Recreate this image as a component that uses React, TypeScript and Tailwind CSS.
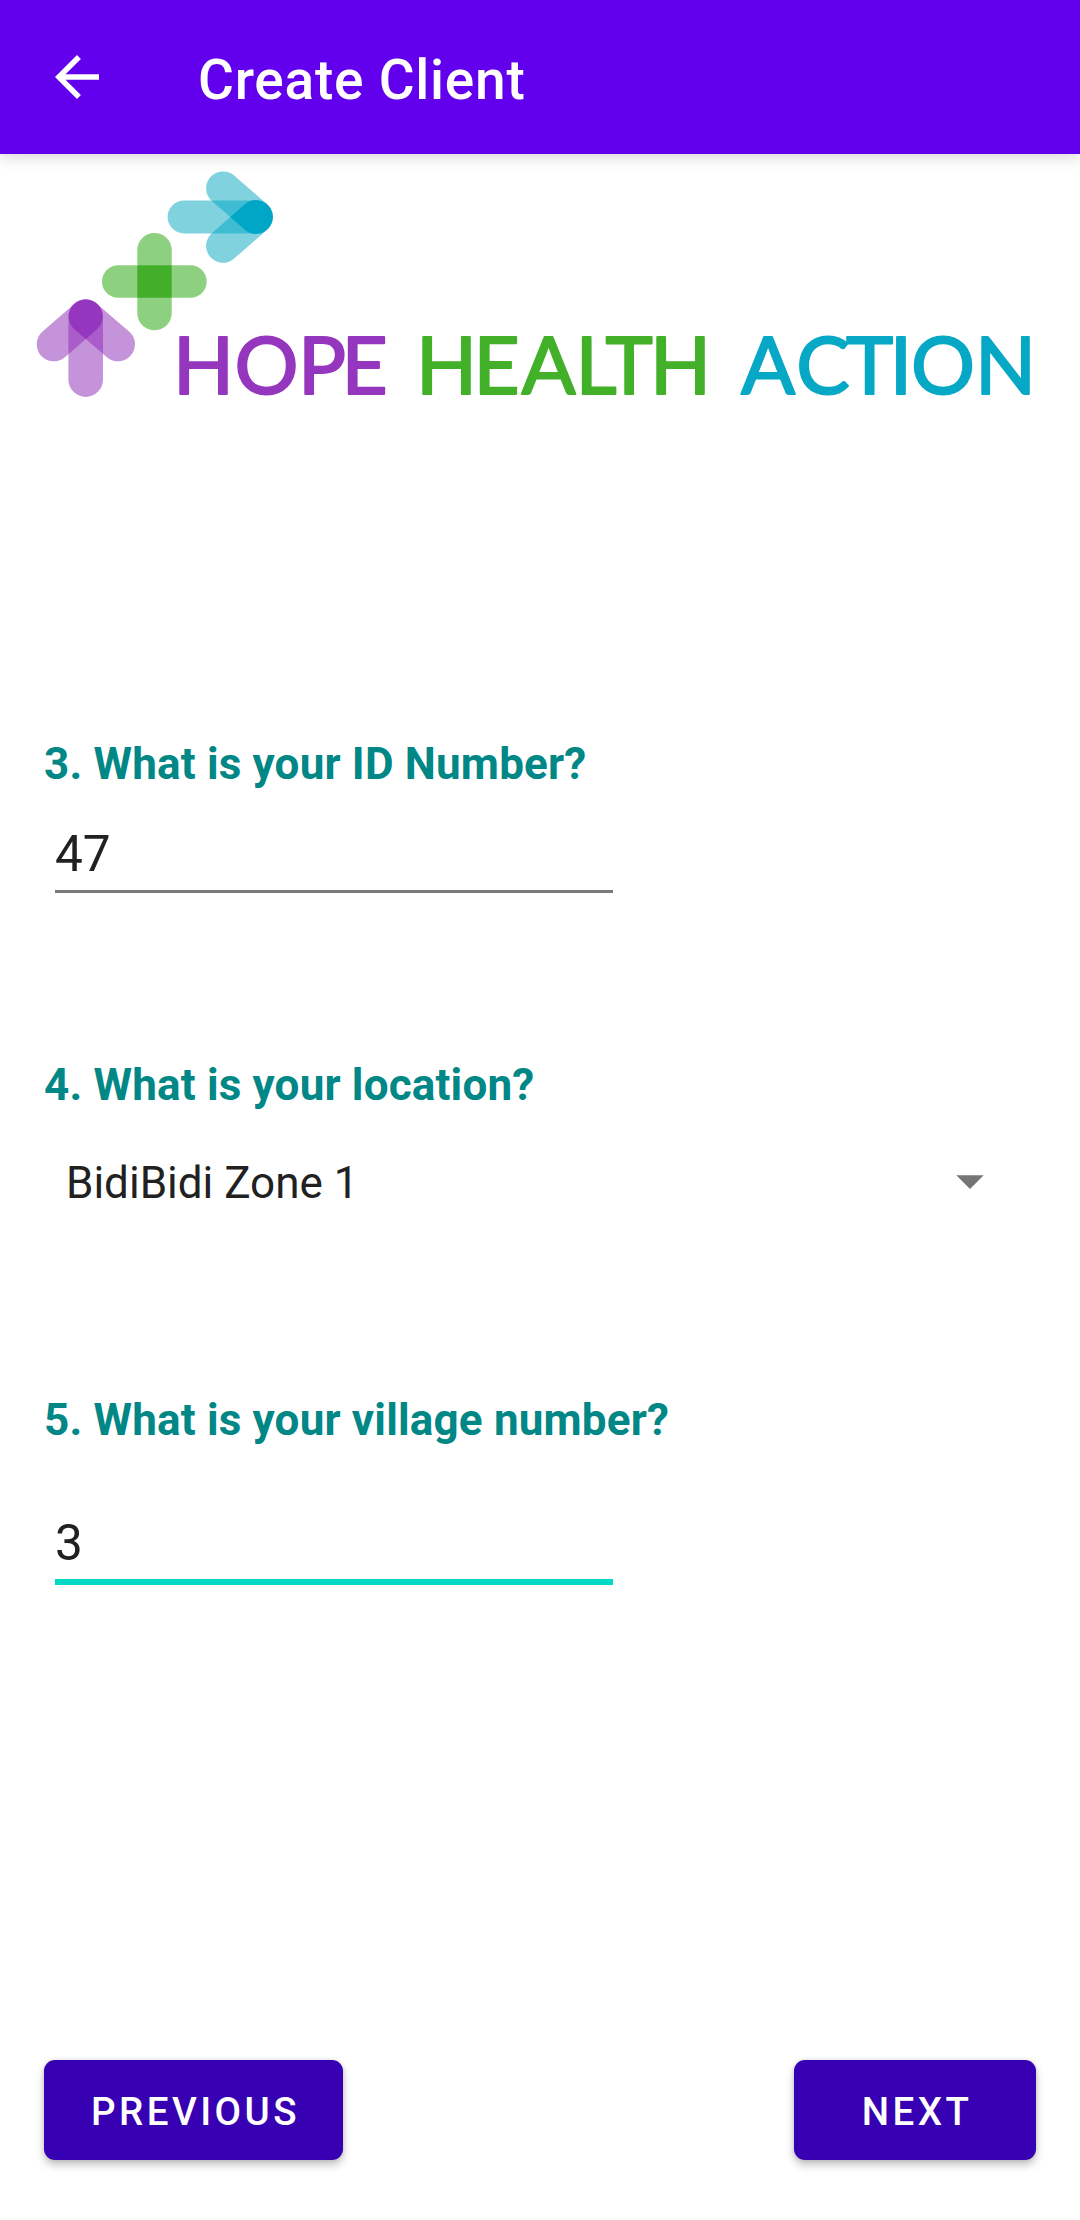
import type { ReactNode } from 'react';

type CapsuleProps = { x1: number; y1: number; x2: number; y2: number; r: number };

/* A pill whose round ends are centred on the two given points. */
function Capsule({ x1, y1, x2, y2, r }: CapsuleProps) {
  const length = Math.hypot(x2 - x1, y2 - y1);
  const angle = (Math.atan2(y2 - y1, x2 - x1) * 180) / Math.PI;
  return (
    <rect
      x={x1 - r}
      y={y1 - r}
      width={length + 2 * r}
      height={2 * r}
      rx={r}
      transform={`rotate(${angle} ${x1} ${y1})`}
    />
  );
}

type ArrowProps = {
  id: string;
  stem: CapsuleProps;
  armA: CapsuleProps;
  armB: CapsuleProps;
  light: string;
  mid: string;
  dark: string;
};

function LogoArrow({ id, stem, armA, armB, light, mid, dark }: ArrowProps) {
  return (
    <g>
      <clipPath id={`${id}-stem`}>{Capsule(stem)}</clipPath>
      <clipPath id={`${id}-arm`}>{Capsule(armB)}</clipPath>
      <g fill={light}>
        <Capsule {...stem} />
        <Capsule {...armA} />
        <Capsule {...armB} />
      </g>
      <g fill={mid} clipPath={`url(#${id}-stem)`}>
        <Capsule {...armA} />
        <Capsule {...armB} />
      </g>
      <g fill={dark} clipPath={`url(#${id}-arm)`}>
        <Capsule {...armA} />
      </g>
    </g>
  );
}

function LogoWord({ x, color, children }: { x: string; color: string; children: string }) {
  return (
    <text
      x={x}
      y={394.3}
      fill={color}
      stroke={color}
      strokeWidth={2}
      strokeLinejoin="round"
      textAnchor="middle"
      fontSize={80}
      fontFamily="Lato, sans-serif"
    >
      {children}
    </text>
  );
}

function Logo() {
  return (
    <svg
      className="h-[286px] w-full overflow-visible"
      viewBox="0 154 1080 286"
      role="img"
      aria-label="Hope Health Action"
    >
      <LogoArrow
        id="up"
        stem={{ x1: 85.7, y1: 316.6, x2: 85.7, y2: 379.6, r: 17.3 }}
        armA={{ x1: 85.7, y1: 316.6, x2: 53.7, y2: 344.3, r: 17 }}
        armB={{ x1: 85.7, y1: 316.6, x2: 118, y2: 344.3, r: 17 }}
        light="#c593d9"
        mid="#a95cca"
        dark="#9537be"
      />
      <g fill="#8dd07f">
        <rect x="137.3" y="233" width="34.4" height="97.3" rx="17.2" />
        <rect x="102" y="265.3" width="104.7" height="32.4" rx="16.2" />
      </g>
      <rect x="137.3" y="265.3" width="34.4" height="32.4" fill="#42ae29" />
      <LogoArrow
        id="right"
        stem={{ x1: 256.3, y1: 217, x2: 184, y2: 217, r: 16.4 }}
        armA={{ x1: 256, y1: 217, x2: 223, y2: 188.3, r: 16.9 }}
        armB={{ x1: 256, y1: 217, x2: 223, y2: 245.9, r: 16.9 }}
        light="#80d2df"
        mid="#3dbcd2"
        dark="#00a6c6"
      />
      <LogoWord x="203.5 266.5 322 364.5" color="#9537be">HOPE</LogoWord>
      <LogoWord x="446.5 496.5 548.5 596 629 680.5" color="#42b029">HEALTH</LogoWord>
      <LogoWord x="768 823 869.5 901 943 1005.5" color="#06a8c5">ACTION</LogoWord>
    </svg>
  );
}

function Question({ children }: { children: ReactNode }) {
  return (
    <label className="ml-[44px] block text-[44px]/[52px] font-bold tracking-[0.18px] text-[#018786]">{children}</label>
  );
}

function ContainedButton({ children, className }: { children: string; className: string }) {
  return (
    <button
      className={`flex h-[100px] items-center justify-center rounded-[11px] bg-[#3700b3] pt-[3px] pl-[4px] text-[38.5px] font-medium tracking-[0.0893em] text-white shadow-[0_5px_8px_rgba(0,0,0,0.24),0_0_4px_rgba(0,0,0,0.12)] ${className}`}
    >
      {children}
    </button>
  );
}

export default function App() {
  return (
    <div className="flex h-[2220px] w-[1080px] flex-col bg-white font-[Roboto,sans-serif] text-[#212121]">
      <header className="z-10 flex h-[154px] shrink-0 items-center bg-[#6200ee] pl-[44px] text-white shadow-[0_3px_14px_rgba(0,0,0,0.16)]">
        <svg className="size-[66px]" viewBox="0 0 24 24" fill="currentColor">
          <path d="M20 11H7.83l5.59-5.59L12 4l-8 8 8 8 1.41-1.41L7.83 13H20v-2z" />
        </svg>
        <h1 className="ml-[88px] pt-[6px] text-[55px] font-medium tracking-[0.75px]">Create Client</h1>
      </header>

      <Logo />

      <main className="flex flex-1 flex-col pt-[298px]">
        <section>
          <Question>3. What is your ID Number?</Question>
          <div className="mt-[35px] ml-[55px] h-[68px] w-[558px] border-b-3 border-[#7a7a7a] text-[49.5px]/[58px]">47</div>
        </section>

        <section className="mt-[166px]">
          <Question>4. What is your location?</Question>
          <div className="mt-[46px] mr-[96px] ml-[66px] flex h-[52px] items-center justify-between text-[44px]/[52px]">
            <span>BidiBidi Zone 1</span>
            <svg className="mb-[2px] h-[14px] w-[28px]" viewBox="0 0 28 14" fill="#757575">
              <path d="M0.3 0.2h27.4L14 13.9z" />
            </svg>
          </div>
        </section>

        <section className="mt-[185px]">
          <Question>5. What is your village number?</Question>
          <div className="mt-[68px] ml-[55px] h-[71px] w-[558px] border-b-6 border-[#03dac5] text-[49.5px]/[58px]">3</div>
        </section>

        <div className="mt-auto mb-[60px] flex justify-between px-[44px]">
          <ContainedButton className="w-[299px]">PREVIOUS</ContainedButton>
          <ContainedButton className="w-[242px]">NEXT</ContainedButton>
        </div>
      </main>
    </div>
  );
}
